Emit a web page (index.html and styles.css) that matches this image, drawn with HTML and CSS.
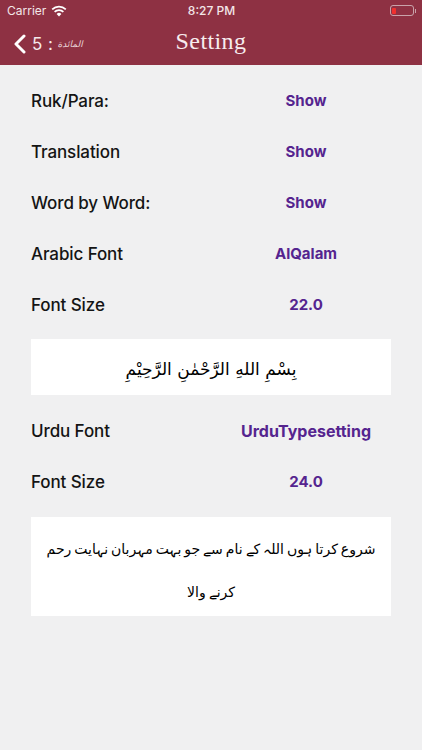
FILE: index.html
```html
<!DOCTYPE html>
<html lang="en">
<head>
<meta charset="utf-8">
<title>Setting</title>
<link rel="stylesheet" href="styles.css">
</head>
<body>
<header class="header">
  <div class="status">
    <div class="status-left">
      <span>Carrier</span>
      <svg class="wifi" viewBox="0 0 16 12" width="16" height="12" aria-hidden="true">
        <path d="M8 11.6 5.6 9a3.4 3.4 0 0 1 4.8 0Z" fill="#fff"/>
        <path d="M3.6 6.9a6.3 6.3 0 0 1 8.8 0" fill="none" stroke="#fff" stroke-width="1.7"/>
        <path d="M1.2 4.3a9.8 9.8 0 0 1 13.6 0" fill="none" stroke="#fff" stroke-width="1.7"/>
      </svg>
    </div>
    <div class="status-time">8:27 PM</div>
    <div class="status-right">
      <div class="battery"><div class="battery-level"></div></div>
      <div class="battery-tip"></div>
    </div>
  </div>
  <nav class="nav">
    <div class="back">
      <svg class="chevron" viewBox="0 0 13 20" width="13" height="20" aria-hidden="true">
        <path d="M11 2 3 10l8 8" fill="none" stroke="#fff" stroke-width="3" stroke-linecap="round" stroke-linejoin="round"/>
      </svg>
      <span class="back-num">5 :</span>
      <span class="back-ar" lang="ar" dir="rtl">المائدة</span>
    </div>
    <h1 class="title">Setting</h1>
  </nav>
</header>
<main class="content">
  <div class="row"><span class="label">Ruk/Para:</span><span class="value">Show</span></div>
  <div class="row"><span class="label">Translation</span><span class="value">Show</span></div>
  <div class="row"><span class="label">Word by Word:</span><span class="value">Show</span></div>
  <div class="row"><span class="label">Arabic Font</span><span class="value">AlQalam</span></div>
  <div class="row"><span class="label">Font Size</span><span class="value">22.0</span></div>
  <div class="card card-arabic" lang="ar" dir="rtl">بِسْمِ اللهِ الرَّحْمٰنِ الرَّحِيْمِ</div>
  <div class="row row-urdu"><span class="label">Urdu Font</span><span class="value value-wide">UrduTypesetting</span></div>
  <div class="row"><span class="label">Font Size</span><span class="value">24.0</span></div>
  <div class="card card-urdu" lang="ur" dir="rtl">شروع کرتا ہوں اللہ کے نام سے جو بہت مہربان نہایت رحم کرنے والا</div>
</main>
</body>
</html>
```
FILE: styles.css
```css
* { box-sizing: border-box; margin: 0; padding: 0; }
html, body { height: 100%; }
body {
  background: #f0f0f1;
  font-family: Inter, "Liberation Sans", sans-serif;
  color: #111;
  overflow: hidden;
}
.header { background: #8e3143; color: #fff; height: 65px; }
.status {
  height: 21px;
  padding: 0 6px 0 7px;
  display: grid;
  grid-template-columns: 1fr auto 1fr;
  align-items: center;
  font-size: 12px;
  color: #f3e6e8;
}
.status-left { display: flex; align-items: center; gap: 5px; }
.status-time { font-weight: 500; }
.status-right { display: flex; justify-content: flex-end; align-items: center; }
.battery {
  width: 24px;
  height: 11px;
  border: 1px solid #c9a3aa;
  border-radius: 3px;
  padding: 1.5px;
}
.battery-level { width: 4px; height: 100%; background: #f0302e; border-radius: 1px; }
.battery-tip { width: 1.5px; height: 4px; background: #c9a3aa; margin-left: 1px; }
.nav { position: relative; height: 44px; display: flex; align-items: center; justify-content: center; }
.back {
  position: absolute;
  left: 13px;
  top: 1px;
  height: 44px;
  display: flex;
  align-items: center;
  gap: 4px;
  color: #f5e9eb;
}
.chevron { flex: none; }
.back-num { font-size: 17px; margin-left: 2px; letter-spacing: 0.5px; }
.back-ar { font-family: "DejaVu Sans", sans-serif; font-size: 9px; font-style: italic; color: #e9d3d7; }
.title {
  font-family: "Liberation Serif", serif;
  font-weight: 400;
  font-size: 24px;
  letter-spacing: 0.4px;
  margin-bottom: 4px;
  color: #f7ecee;
}
.content { padding: 10px 31px 0; display: flex; flex-direction: column; }
.row {
  height: 51px;
  display: grid;
  grid-template-columns: 190px 170px;
  align-items: center;
}
.label { font-size: 17px; font-weight: 500; letter-spacing: -0.1px; color: #141414; }
.value { font-size: 15px; font-weight: 700; text-align: center; color: #55248f; }
.value-wide { font-size: 16px; }
.card {
  background: #fff;
  display: flex;
  align-items: center;
  justify-content: center;
  text-align: center;
  color: #000;
  font-family: "DejaVu Sans", sans-serif;
}
.card-arabic { height: 56px; margin-top: 9px; padding-top: 3px; font-size: 17px; }
.row-urdu { margin-top: 10px; }
.card-urdu { height: 99px; margin-top: 10px; padding: 8px 10px 0; font-size: 14px; word-spacing: -1.5px; line-height: 43px; }
```
